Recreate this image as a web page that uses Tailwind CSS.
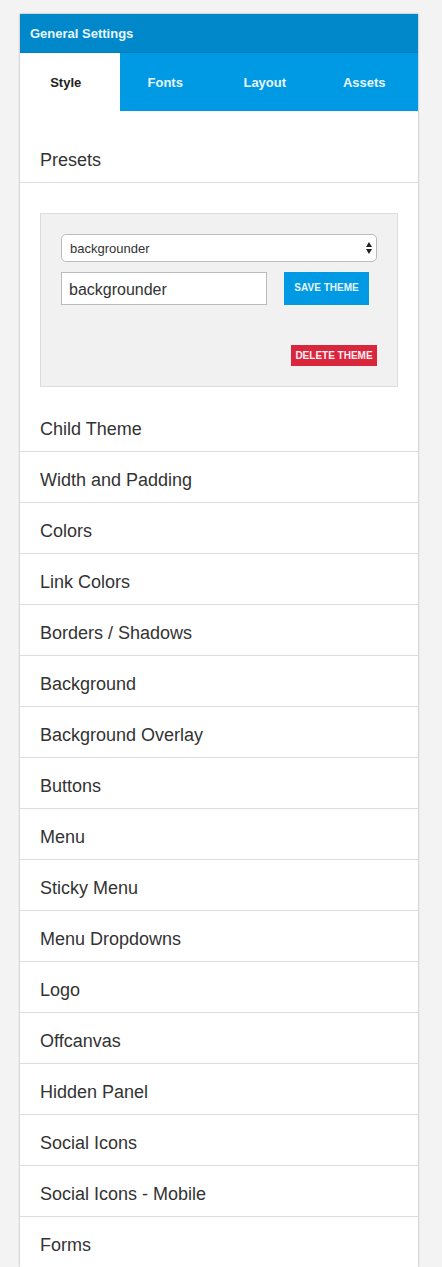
<!DOCTYPE html>
<html lang="en">
<head>
<meta charset="utf-8">
<meta name="viewport" content="width=device-width, initial-scale=1">
<title>General Settings</title>
<script src="https://cdn.jsdelivr.net/npm/@tailwindcss/browser@4"></script>
</head>
<body class="bg-[#f3f3f3] font-['Liberation_Sans',Arial,sans-serif] text-[#333333]">
<main class="mt-[14px] mr-6 ml-5 bg-white shadow-[0_0_2px_rgba(0,0,0,0.35)]">
  <h1 class="border-b border-[#007fbe] bg-[#0088cb] pt-[10px] pb-2 pl-[10px] text-[13px] leading-5 font-bold text-[#e8f6fd]">General Settings</h1>
  <nav class="grid grid-cols-4 bg-[#0099e3] text-center text-[13px] leading-[56px] font-bold text-[#e8f6fd]">
    <a href="#style" aria-current="page" class="bg-white pt-[2px] pr-2 text-[#222222]">Style</a>
    <a href="#fonts" class="pt-[2px] pr-2">Fonts</a>
    <a href="#layout" class="pt-[2px] pr-2">Layout</a>
    <a href="#assets" class="pt-[2px] pr-2">Assets</a>
  </nav>

  <section id="style" class="pt-[21px] text-lg">
    <h2><button type="button" aria-expanded="true" class="block w-full border-b border-[#dddddd] px-5 pt-[15px] pb-2 text-left leading-[27px]">Presets</button></h2>
    <form class="mx-5 mt-[30px] mb-[14px] border border-[#dddddd] bg-[#f1f1f1] p-5">
      <div class="relative">
        <select aria-label="Preset" class="block h-7 w-full appearance-none rounded-[5px] border border-[#bbbbbb] bg-white px-2 pt-[2px] text-[13px] leading-5">
          <option>backgrounder</option>
        </select>
        <svg class="pointer-events-none absolute top-2 right-[5px] h-3 w-[6px]" viewBox="0 0 6 12" fill="#222222" aria-hidden="true">
          <path d="M3 0 6 5H0zM3 12 0 7h6z"/>
        </svg>
      </div>
      <div class="mt-[10px] mr-2 flex gap-[17px]">
        <input aria-label="Theme name" type="text" value="backgrounder" class="h-[33px] min-w-0 flex-1 border border-[#bbbbbb] bg-white px-[7px] pt-[2px] text-base">
        <button type="button" class="w-[85px] bg-[#0099e3] pb-[2px] text-[10px] font-bold text-[#e8f6fd]">SAVE THEME</button>
      </div>
      <div class="mt-10 flex justify-end">
        <button type="button" class="h-[21px] w-[86px] bg-[#d9263c] text-[10px] font-bold whitespace-nowrap text-[#fdf0f2]">DELETE THEME</button>
      </div>
    </form>

    <ul class="[&_button]:block [&_button]:w-full [&_button]:px-5 [&_button]:pt-[15px] [&_button]:pb-2 [&_button]:text-left [&_button]:leading-[27px] [&>li]:border-b [&>li]:border-[#dddddd] [&>li:last-child]:border-b-0">
      <li><button type="button">Child Theme</button></li>
      <li><button type="button">Width and Padding</button></li>
      <li><button type="button">Colors</button></li>
      <li><button type="button">Link Colors</button></li>
      <li><button type="button">Borders / Shadows</button></li>
      <li><button type="button">Background</button></li>
      <li><button type="button">Background Overlay</button></li>
      <li><button type="button">Buttons</button></li>
      <li><button type="button">Menu</button></li>
      <li><button type="button">Sticky Menu</button></li>
      <li><button type="button">Menu Dropdowns</button></li>
      <li><button type="button">Logo</button></li>
      <li><button type="button">Offcanvas</button></li>
      <li><button type="button">Hidden Panel</button></li>
      <li><button type="button">Social Icons</button></li>
      <li><button type="button">Social Icons - Mobile</button></li>
      <li><button type="button">Forms</button></li>
    </ul>
  </section>
</main>
</body>
</html>
